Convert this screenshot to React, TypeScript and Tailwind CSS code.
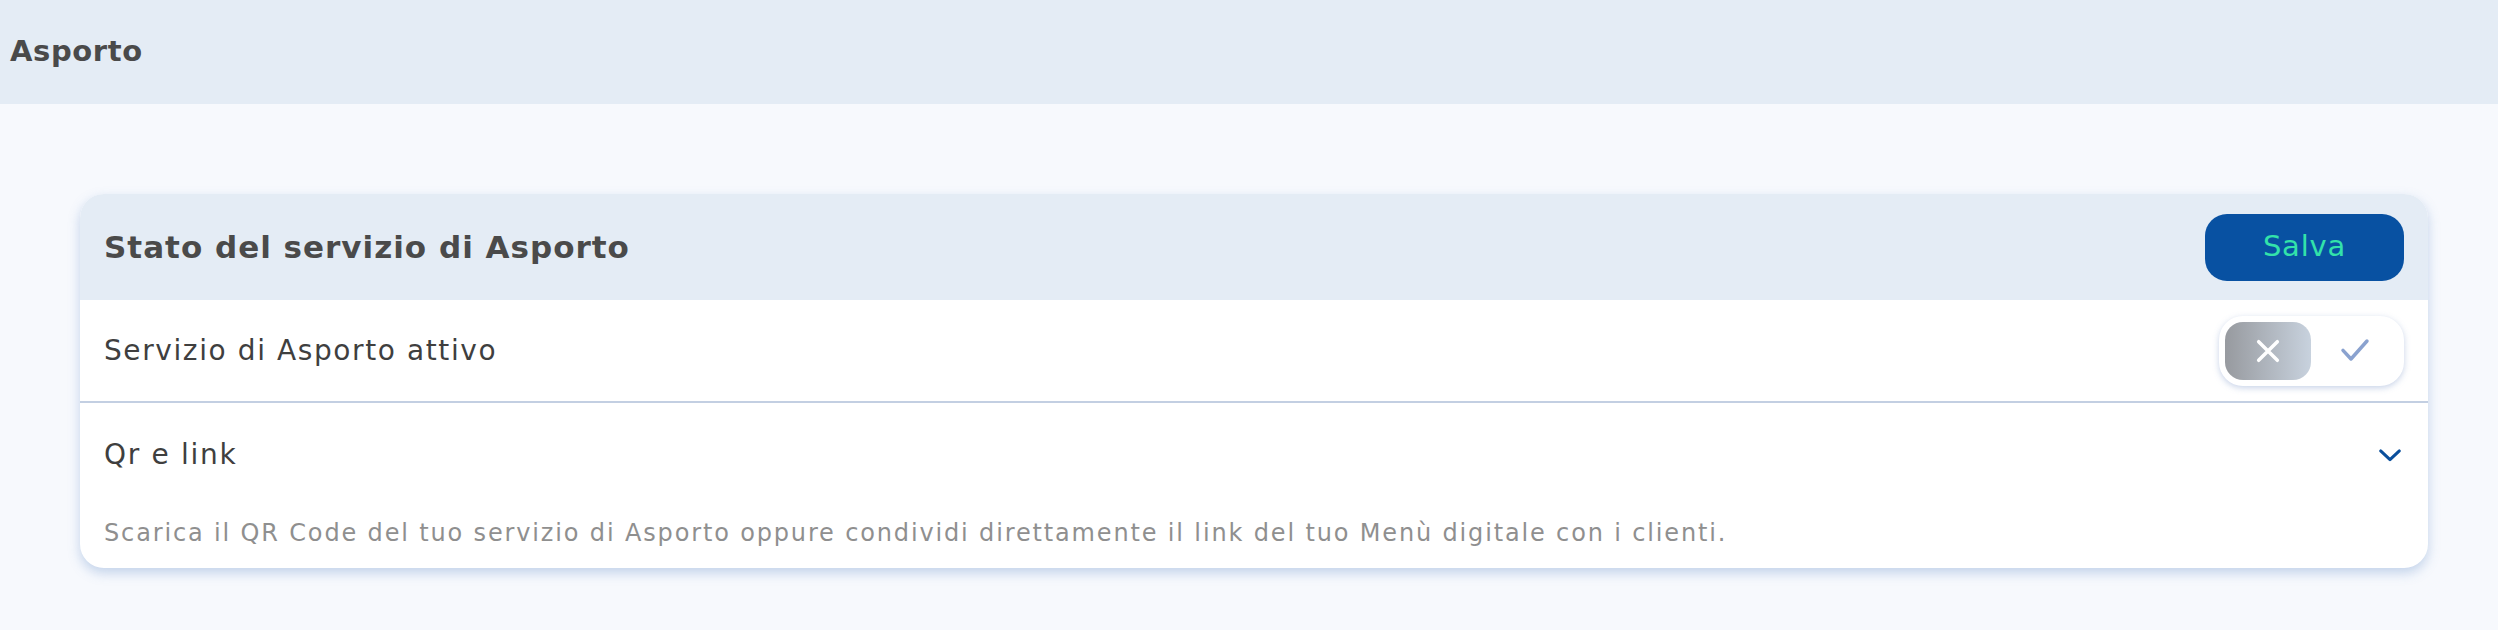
import React, { useState } from 'react';

const font = { fontFamily: '"DejaVu Sans", "Noto Sans", sans-serif' };

const App: React.FC = () => {
  const [active, setActive] = useState<boolean>(false);
  const [open, setOpen] = useState<boolean>(false);

  return (
    <div className="min-h-[630px] bg-[#f7f9fd]" style={font}>
      <header className="h-[104px] bg-[#e4ecf5] flex items-center pl-[10px]">
        <h1 className="text-[29px] font-bold tracking-[0.6px] text-[#4a4a4a]">Asporto</h1>
      </header>

      <main className="pt-[90px] pl-[80px] pr-[70px]">
        <section className="bg-white rounded-[24px] overflow-hidden shadow-[0_5px_12px_rgba(96,140,200,0.35)]">
          <div className="h-[106px] bg-[#e4ecf5] flex items-center justify-between pl-[24px] pr-[24px]">
            <h2 className="text-[31px] font-bold tracking-[1px] text-[#4a4a4a]">Stato del servizio di Asporto</h2>
            <button className="w-[199px] h-[67px] rounded-[22px] bg-[#0851a2] text-[#33e2aa] text-[29px] tracking-[0.8px]">
              Salva
            </button>
          </div>

          <div className="h-[103px] border-b-2 border-[#c3cfe2] flex items-center justify-between pl-[24px] pr-[24px]">
            <span className="text-[28px] tracking-[1.6px] text-[#3f3f3f]">Servizio di Asporto attivo</span>
            <button
              onClick={() => setActive(!active)}
              className="w-[185px] h-[70px] rounded-[24px] bg-white shadow-[0_2px_6px_rgba(96,130,190,0.35)] flex items-center p-[6px]"
            >
              <span className="w-[86px] h-[58px] rounded-[18px] bg-gradient-to-r from-[#979a9f] to-[#c8d2de] flex items-center justify-center">
                <svg width="28" height="28" viewBox="0 0 24 24" fill="none" stroke="white" strokeWidth="3" strokeLinecap="round">
                  <path d="M4 4L20 20M20 4L4 20" />
                </svg>
              </span>
              <span className="flex-1 flex items-center justify-center">
                <svg width="32" height="32" viewBox="0 0 24 24" fill="none" stroke="#8aa2cf" strokeWidth="2.6" strokeLinecap="round" strokeLinejoin="round">
                  <path d="M3 11.5L9 18L21 4.5" />
                </svg>
              </span>
            </button>
          </div>

          <div className="pl-[24px] pr-[24px] pt-[31px] pb-[17px]">
            <div className="flex items-center justify-between cursor-pointer" onClick={() => setOpen(!open)}>
              <span className="text-[28px] tracking-[1.7px] text-[#3f3f3f]">Qr e link</span>
              <svg width="28" height="28" viewBox="0 0 24 24" fill="none" stroke="#0a4f9c" strokeWidth="2.6" strokeLinecap="round" strokeLinejoin="round">
                <path d="M4 8.5L12 16L20 8.5" />
              </svg>
            </div>
            <p className="mt-[39px] text-[24px] tracking-[1.85px] text-[#8f8f8f]">
              Scarica il QR Code del tuo servizio di Asporto oppure condividi direttamente il link del tuo Menù digitale con i clienti.
            </p>
          </div>
        </section>
      </main>
    </div>
  );
};

export default App;
